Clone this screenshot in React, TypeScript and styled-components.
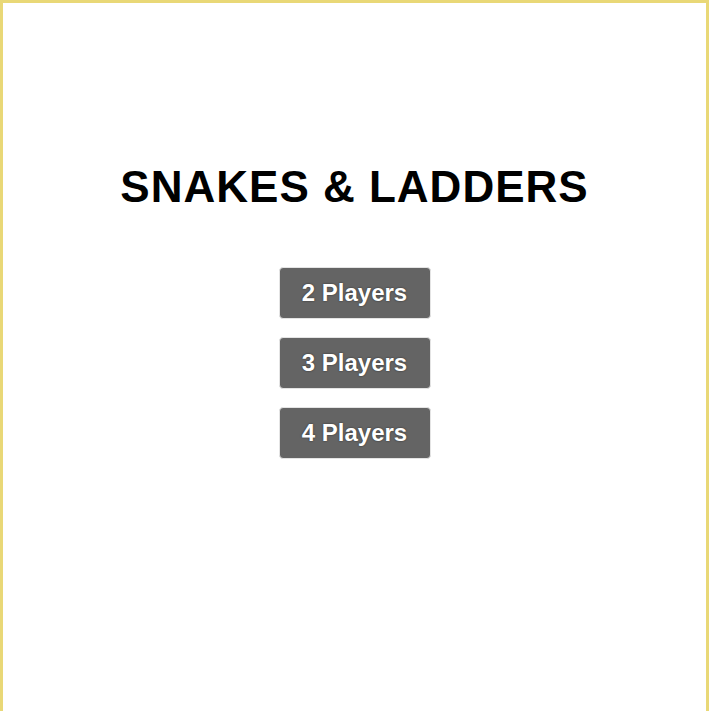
import React from 'react';
import styled, { createGlobalStyle } from 'styled-components';

const GlobalStyle = createGlobalStyle`
  html, body {
    margin: 0;
    padding: 0;
  }
  body {
    font-family: "Liberation Sans", Arial, sans-serif;
    background: #ffffff;
  }
`;

const Frame = styled.div`
  min-height: 740px;
  border: 3px solid #e9d877;
  box-sizing: border-box;
  display: flex;
  flex-direction: column;
  align-items: center;
  padding-top: 159px;
`;

const Title = styled.h1`
  margin: 0 0 55px;
  font-size: 44px;
  font-weight: bold;
  letter-spacing: 1px;
  color: #000;
`;

const Menu = styled.div`
  display: flex;
  flex-direction: column;
  gap: 18px;
`;

const PlayerButton = styled.button`
  width: 152px;
  height: 52px;
  border: 1px solid #e4e4e4;
  border-radius: 4px;
  background: #646464;
  color: #fff;
  font-family: "Liberation Sans", Arial, sans-serif;
  font-size: 24px;
  font-weight: bold;
  text-shadow: 0 0 2px rgba(0, 0, 0, 0.6);
  cursor: pointer;
`;

const counts = [2, 3, 4];

const App = () => {
  return (
    <>
      <GlobalStyle />
      <Frame>
        <Title>SNAKES &amp; LADDERS</Title>
        <Menu>
          {counts.map((n) => (
            <PlayerButton key={n}>{n} Players</PlayerButton>
          ))}
        </Menu>
      </Frame>
    </>
  );
};

export default App;
